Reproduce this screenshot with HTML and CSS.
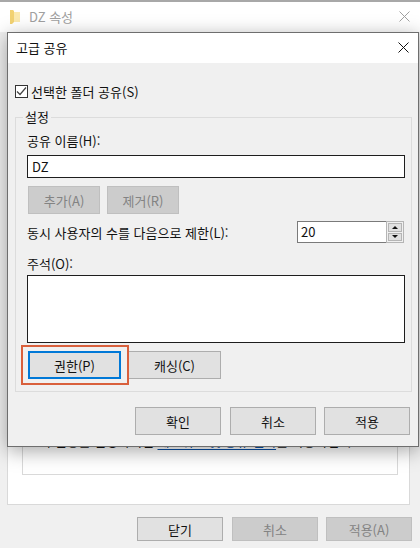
FILE: index.html
```html
<!DOCTYPE html>
<html lang="ko">
<head>
    <meta charset="UTF-8">
    <meta name="viewport" content="width=device-width, initial-scale=1.0">
    <title>고급 공유</title>
    <link rel="stylesheet" href="styles.css">
</head>
<body>

<!-- Properties window, behind the dialog -->
<div class="window">
    <div class="window-title">
        <svg class="folder-icon" width="10" height="14" viewBox="0 0 10 14">
            <path d="M3 2h7v10H3z" fill="#fbe9ae"/>
            <path d="M0 0h3l1 1v11l-2 2H0z" fill="#f2d272"/>
        </svg>
        <span class="window-name">DZ 속성</span>
        <svg class="close-icon faded" width="11" height="11" viewBox="0 0 11 11">
            <path d="M.5.5l10 10M10.5.5l-10 10"/>
        </svg>
    </div>
    <div class="window-body">
        <div class="panel">
            <div class="panel-box">
                <p class="panel-text">이 설정을 변경하려면 <a href="#">네트워크 및 공유 센터</a>를 사용하십시오.</p>
            </div>
        </div>
        <div class="window-buttons">
            <button class="btn first">닫기</button>
            <button class="btn disabled">취소</button>
            <button class="btn disabled">적용(A)</button>
        </div>
    </div>
</div>

<!-- Advanced sharing dialog -->
<div class="dialog">
    <div class="dialog-title">
        <span>고급 공유</span>
        <svg class="close-icon" width="11" height="11" viewBox="0 0 11 11">
            <path d="M.5.5l10 10M10.5.5l-10 10"/>
        </svg>
    </div>
    <div class="dialog-body">
        <label class="check-row">
            <span class="checkbox">
                <svg width="11" height="11" viewBox="0 0 11 11"><path d="M1 5.5l3 3 6-7"/></svg>
            </span>
            선택한 폴더 공유(S)
        </label>

        <div class="settings">
            <span class="legend">설정</span>
            <div class="label">공유 이름(H):</div>
            <div class="field name-field">DZ</div>
            <div class="add-buttons">
                <button class="btn small disabled">추가(A)</button>
                <button class="btn small disabled">제거(R)</button>
            </div>
            <div class="limit-row">
                <span>동시 사용자의 수를 다음으로 제한(L):</span>
                <div class="spin">
                    <div class="spin-value">20</div>
                    <div class="spin-buttons">
                        <span class="spin-btn"><i class="arrow-up"></i></span>
                        <span class="spin-btn"><i class="arrow-down"></i></span>
                    </div>
                </div>
            </div>
            <div class="label comment-label">주석(O):</div>
            <div class="field comment-field"></div>
            <div class="perm-buttons">
                <button class="btn perm focused">권한(P)</button>
                <button class="btn perm">캐싱(C)</button>
            </div>
        </div>

        <div class="dialog-buttons">
            <button class="btn wide first">확인</button>
            <button class="btn wide">취소</button>
            <button class="btn wide">적용</button>
        </div>
    </div>
</div>

<!-- Annotation around the permissions button -->
<div class="highlight"></div>

</body>
</html>
```

FILE: styles.css
```css
/* Base Styles */
* {
    margin: 0;
    padding: 0;
    box-sizing: border-box;
    font-family: "Noto Sans CJK KR", "Noto Sans", sans-serif;
}

body {
    width: 420px;
    height: 548px;
    overflow: hidden;
    background: #f0f0f0;
    color: #111;
    font-size: 13px;
}

/* Back window */
.window {
    height: 548px;
    border-top: 2px solid #a8a8a8;
    display: flex;
    flex-direction: column;
}

.window-title {
    height: 30px;
    background: #fff;
    display: flex;
    align-items: center;
    padding: 0 10px 2px 10px;
    flex-shrink: 0;
}

.folder-icon {
    margin: 2px 9px 0 0;
}

.window-name {
    flex: 1;
    color: #a0a0a0;
}

.window-body {
    flex: 1;
    padding: 0 8px 6px 7px;
    display: flex;
    flex-direction: column;
}

.panel {
    height: 473px;
    margin-right: 2px;
    background: #fff;
    border: 1px solid #d9d9d9;
    padding: 0 11px 29px 14px;
}

.panel-box {
    height: 100%;
    border: 1px solid #d9d9d9;
    border-top: 0;
    display: flex;
    align-items: flex-end;
    justify-content: center;
    padding: 0 14px 25px 0;
}

.panel-text {
    line-height: 16px;
    white-space: nowrap;
}

.panel-text a {
    color: #0a50a5;
    text-underline-offset: 3px;
}

.window-buttons {
    display: flex;
    justify-content: flex-end;
    gap: 8px;
    margin-top: 12px;
}

/* Buttons */
.btn {
    width: 86px;
    height: 24px;
    background: #e1e1e1;
    border: 1px solid #adadad;
    color: #111;
    font-size: 13px;
}

.btn.first {
    margin-right: 1px;
}

.btn.disabled {
    background: #ccc;
    border-color: #bfbfbf;
    color: #838383;
}

.btn.small {
    width: 72px;
    height: 28px;
}

.btn.perm {
    width: 93px;
    height: 28px;
}

.btn.focused {
    border: 2px solid #0078d7;
}

.btn.wide {
    height: 28px;
}

.close-icon path {
    fill: none;
    stroke: #111;
    stroke-width: 1;
}

.close-icon.faded path {
    stroke: #a0a0a0;
}

/* Dialog */
.dialog {
    position: absolute;
    left: 7px;
    top: 32px;
    width: 412px;
    height: 415px;
    background: #f0f0f0;
    border: 1px solid #6e6e6e;
    box-shadow: 0 4px 18px rgba(0, 0, 0, 0.35);
    display: flex;
    flex-direction: column;
}

.dialog-title {
    height: 30px;
    background: #fff;
    display: flex;
    align-items: center;
    justify-content: space-between;
    padding: 0 9px 2px 8px;
    flex-shrink: 0;
}

.dialog-body {
    flex: 1;
    padding: 21px 7px 0 7px;
    display: flex;
    flex-direction: column;
}

.check-row {
    display: flex;
    align-items: center;
    gap: 3px;
    height: 14px;
}

.checkbox {
    width: 13px;
    height: 13px;
    background: #fff;
    border: 1px solid #333;
    display: flex;
    align-items: center;
    justify-content: center;
}

.checkbox svg path {
    fill: none;
    stroke: #444;
    stroke-width: 1.2;
}

/* Settings group */
.settings {
    position: relative;
    margin-top: 19px;
    height: 275px;
    width: 397px;
    border: 1px solid #dcdcdc;
    padding: 16px 5px 0 11px;
}

.legend {
    position: absolute;
    left: 7px;
    top: -10px;
    padding: 0 2px;
    line-height: 18px;
    background: #f0f0f0;
}

.label {
    height: 14px;
    line-height: 14px;
}

.field {
    background: #fff;
    border: 1px solid #1e1e1e;
    width: 378px;
}

.name-field {
    height: 23px;
    line-height: 21px;
    padding-left: 4px;
    margin-top: 7px;
}

.add-buttons {
    display: flex;
    gap: 7px;
    margin-top: 8px;
    padding-left: 1px;
}

.limit-row {
    display: flex;
    align-items: center;
    justify-content: space-between;
    height: 22px;
    margin-top: 7px;
}

.spin {
    display: flex;
    width: 107px;
    height: 22px;
    background: #fff;
    border: 1px solid #7a7a7a;
    margin-right: 2px;
}

.spin-value {
    flex: 1;
    line-height: 20px;
    padding-left: 3px;
}

.spin-buttons {
    width: 18px;
    margin: -1px -1px -1px 0;
    border: 1px solid #b5b5b5;
    background: #f0f0f0;
    padding: 1px;
    display: flex;
    flex-direction: column;
    gap: 1px;
}

.spin-btn {
    flex: 1;
    background: #e1e1e1;
    border: 1px solid #b5b5b5;
    display: flex;
    align-items: center;
    justify-content: center;
}

.arrow-up {
    border: 3px solid transparent;
    border-top: 0;
    border-bottom: 3px solid #111;
}

.arrow-down {
    border: 3px solid transparent;
    border-bottom: 0;
    border-top: 3px solid #111;
}

.comment-label {
    margin-top: 14px;
}

.comment-field {
    height: 68px;
    margin-top: 4px;
}

.perm-buttons {
    display: flex;
    margin-top: 8px;
    padding-left: 1px;
    gap: 7px;
}

.dialog-buttons {
    display: flex;
    justify-content: flex-end;
    gap: 8px;
    margin-top: 15px;
    padding-right: 1px;
}

/* Annotation */
.highlight {
    position: absolute;
    left: 21px;
    top: 345px;
    width: 108px;
    height: 40px;
    border: 2px solid #d9603c;
}
```
